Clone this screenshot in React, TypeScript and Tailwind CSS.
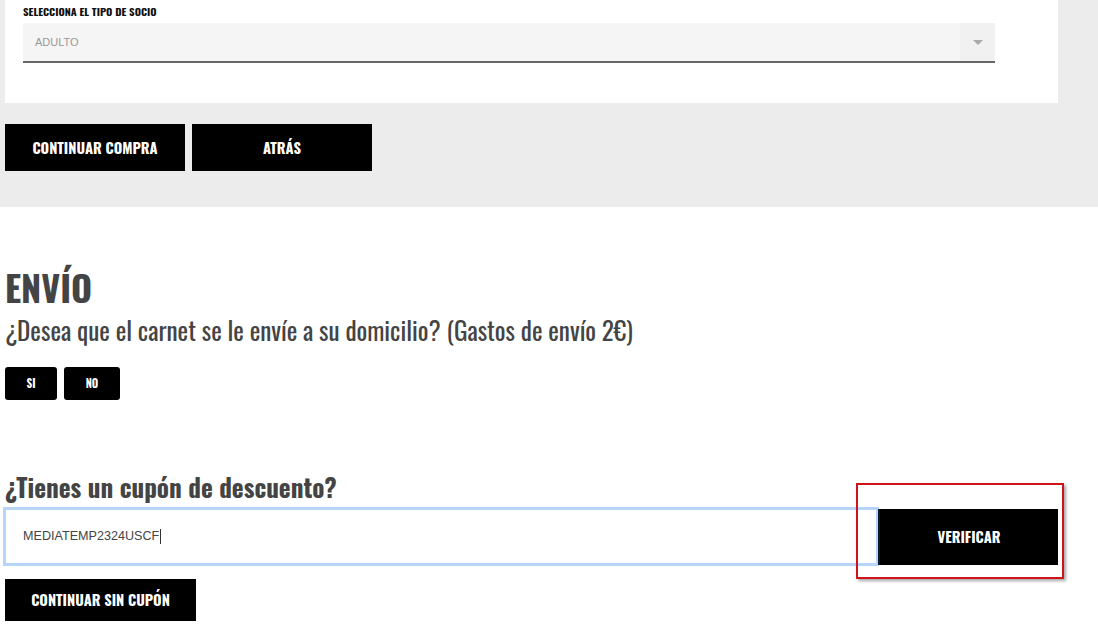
import React from "react";

const cond = "font-['Oswald','Liberation_Sans_Narrow','DejaVu_Sans_Condensed','Arial_Narrow',sans-serif] font-stretch-condensed";

export default function App() {
  return (
    <div className="w-[1098px] h-[634px] overflow-hidden bg-white font-['Liberation_Sans',Arial,sans-serif]">
      {/* top gray area */}
      <div className="bg-[#ececec] h-[207px] pt-0">
        <div className="ml-[5px] w-[1053px] h-[103px] bg-white pl-[18px] pt-[5px]">
          <div className={`${cond} font-bold text-[10.8px] leading-[13px] text-[#111] uppercase`}>
            Selecciona el tipo de socio
          </div>
          <div className="mt-[5px] w-[972px] h-[40px] bg-[#f5f5f5] border-b-2 border-[#666] flex items-center justify-between">
            <span className="pl-[12px] text-[11px] text-[#999]">ADULTO</span>
            <span className="w-[35px] h-full bg-[#f1f1f1] flex items-center justify-center">
              <span className="w-0 h-0 border-l-[5px] border-r-[5px] border-t-[5px] border-l-transparent border-r-transparent border-t-[#aaa]" />
            </span>
          </div>
        </div>
        <div className="flex gap-[7px] ml-[5px] mt-[21px]">
          <button className={`${cond} w-[180px] h-[47px] bg-black text-white font-bold text-[14.6px] uppercase`}>
            Continuar compra
          </button>
          <button className={`${cond} w-[180px] h-[47px] bg-black text-white font-bold text-[14.6px] uppercase`}>
            Atrás
          </button>
        </div>
      </div>

      {/* envío */}
      <div className="pl-[5px] pt-[60px]">
        <h1 className={`${cond} font-bold text-[36px] leading-[40px] text-[#444]`}>ENVÍO</h1>
        <p className={`${cond} font-normal text-[25.2px] leading-[30px] text-[#444] mt-[8px]`}>
          ¿Desea que el carnet se le envíe a su domicilio? (Gastos de envío 2€)
        </p>
        <div className="flex gap-[7px] mt-[22px]">
          <button className={`${cond} w-[52px] h-[33px] bg-black text-white font-bold text-[11px] rounded-[3px]`}>SI</button>
          <button className={`${cond} w-[56px] h-[33px] bg-black text-white font-bold text-[11px] rounded-[3px]`}>NO</button>
        </div>
      </div>

      {/* cupón */}
      <div className="pt-[72px]">
        <h2 className={`${cond} pl-[5px] font-bold text-[25.2px] leading-[30px] text-[#444]`}>¿Tienes un cupón de descuento?</h2>
        <div className="relative flex items-center mt-[5px] h-[59px]">
          <div className="ml-[3px] w-[876px] h-[59px] border-[3px] border-[#b6d5f8] flex items-center pl-[17px] text-[12.6px] text-[#444]">
            MEDIATEMP2324USCF<span className="ml-[1px] w-px h-[15px] bg-[#333]" />
          </div>
          <button className={`${cond} w-[180px] h-[56px] bg-black text-white font-bold text-[14.6px] border-l-2 border-[#0a1a2a] -ml-[1px]`}>
            VERIFICAR
          </button>
          <div className="absolute left-[856px] top-[-24px] w-[208px] h-[96px] border-2 border-[#d0121b] shadow-[2px_2px_3px_rgba(0,0,0,0.35)] pointer-events-none" />
        </div>
        <button className={`${cond} ml-[5px] mt-[13px] w-[191px] h-[42px] bg-black text-white font-bold text-[14.6px] uppercase`}>
          Continuar sin cupón
        </button>
      </div>
    </div>
  );
}
